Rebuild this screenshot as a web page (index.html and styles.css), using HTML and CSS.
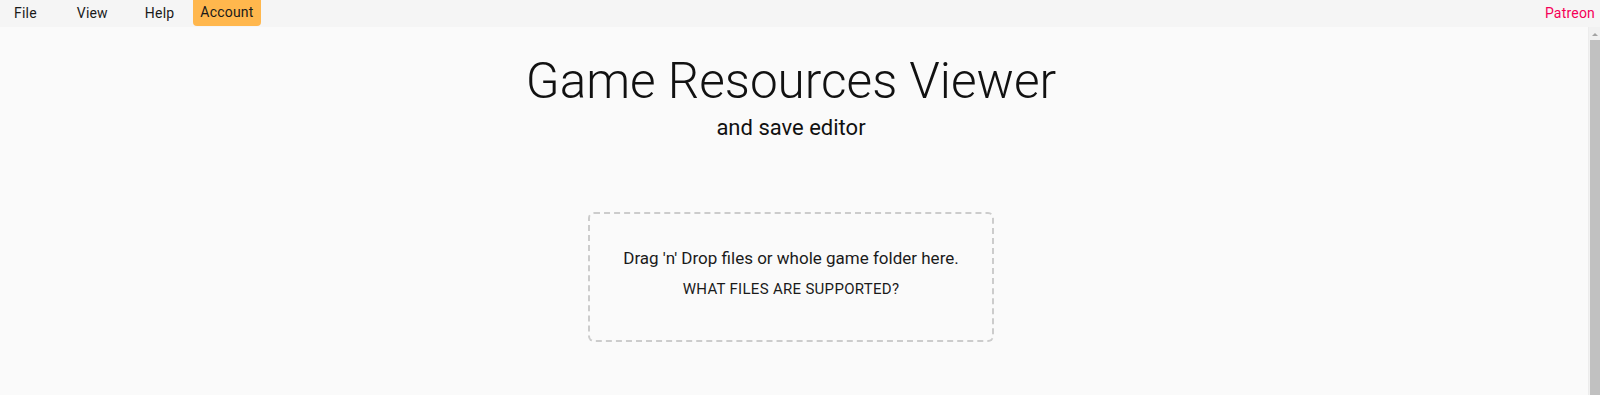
FILE: index.html
```html
<!DOCTYPE html>
<html lang="en">
<head>
    <meta charset="UTF-8">
    <meta name="viewport" content="width=device-width, initial-scale=1.0">
    <title>Game Resources Viewer</title>
    <link rel="stylesheet" href="styles.css">
</head>
<body>
    <div class="menubar">
        <span class="menuItem file">File</span>
        <span class="menuItem view">View</span>
        <span class="menuItem help">Help</span>
        <span class="menuItem account">Account</span>
        <span class="patreon">Patreon</span>
    </div>
    <div class="page">
        <div class="content">
            <h1 class="title">Game Resources Viewer</h1>
            <div class="subtitle">and save editor</div>
            <div class="dropzone">
                <p class="dropText">Drag 'n' Drop files or whole game folder here.</p>
                <span class="supported">What files are supported?</span>
            </div>
        </div>
        <div class="scrollbar">
            <div class="arrow"></div>
            <div class="thumb"></div>
        </div>
    </div>
</body>
</html>
```

FILE: styles.css
```css
html, body {
    margin: 0;
    overflow: hidden;
    height: 100%;
}
body {
    display: flex;
    flex-direction: column;
    background-color: #fafafa;
    font-family: Roboto, "Noto Sans", sans-serif;
    color: rgba(0, 0, 0, 0.87);
}

.menubar {
    display: flex;
    align-items: stretch;
    height: 27px;
    flex-shrink: 0;
    background-color: #f5f5f5;
    font-size: 14px;
    letter-spacing: 0.2px;
}
.menuItem {
    display: flex;
    align-items: center;
    padding: 0 7px;
    color: #1a1a1a;
    margin-top: -2px;
}
.file {
    margin-left: 7px;
}
.view {
    margin-left: 26px;
}
.help {
    margin-left: 23px;
}
.account {
    margin-left: 12px;
    margin-top: 0;
    padding-bottom: 2px;
    background-color: #ffb74d;
    border-radius: 0 0 4px 4px;
    height: 24px;
}
.patreon {
    margin-left: auto;
    margin-right: 5px;
    display: flex;
    align-items: center;
    margin-top: -2px;
    color: #f50057;
}

.page {
    flex: 1;
    display: flex;
}
.content {
    flex: 1;
    display: flex;
    flex-direction: column;
    align-items: center;
    padding-right: 6px;
}
.scrollbar {
    width: 11px;
    display: flex;
    flex-direction: column;
    background-color: #f1f1f1;
    border-left: 1px solid #ececec;
}
.arrow {
    width: 0;
    height: 0;
    margin: 6px auto 4px;
    border-left: 3px solid transparent;
    border-right: 3px solid transparent;
    border-bottom: 3px solid #a3a3a3;
}
.thumb {
    flex: 1;
    margin-left: 1px;
    background-color: #c1c1c1;
}

.title {
    margin: 24px 0 0 0;
    font-size: 49.5px;
    font-weight: 300;
    line-height: 60px;
    color: #111;
}
.subtitle {
    font-size: 22px;
    line-height: 26px;
    margin-top: 4px;
    color: #111;
}
.dropzone {
    margin-top: 71px;
    width: 402px;
    height: 126px;
    border: 2px dashed #cccccc;
    border-radius: 6px;
    display: flex;
    flex-direction: column;
    align-items: center;
    justify-content: center;
}
.dropText {
    margin: 0;
    font-size: 17px;
    line-height: 24px;
    color: #1a1a1a;
}
.supported {
    margin-top: 7px;
    font-size: 15px;
    font-weight: 400;
    letter-spacing: 0.3px;
    text-transform: uppercase;
    line-height: 24px;
    color: #1a1a1a;
    padding-bottom: 7px;
}
```
